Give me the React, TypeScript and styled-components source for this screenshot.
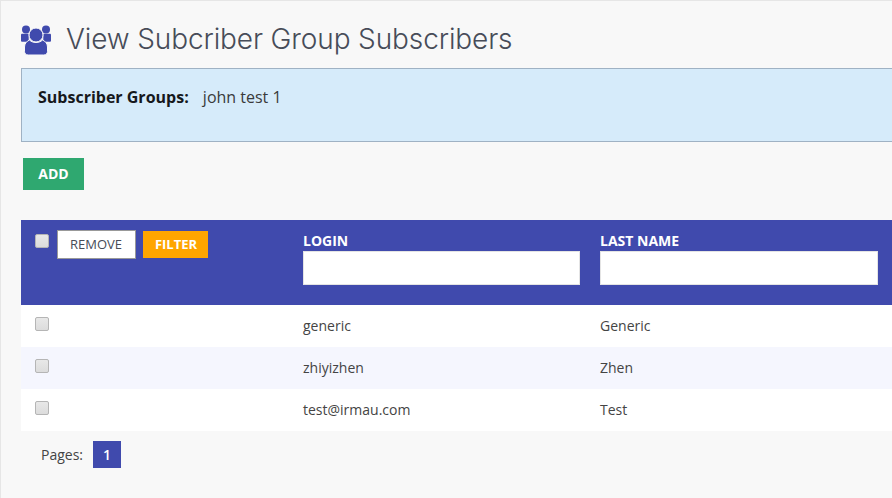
import * as React from 'react';
import styled, { createGlobalStyle } from 'styled-components';

const PRIMARY = '#404aad';
const PAGE_BG = '#f8f8f8';

const GlobalStyle = createGlobalStyle`
  html, body {
    margin: 0;
    padding: 0;
    height: 100%;
    overflow: hidden;
  }
  body {
    background: ${PAGE_BG};
    font-family: 'Open Sans', 'Liberation Sans', sans-serif;
    font-size: 14px;
    color: #444;
  }
`;

const StyledPage = styled.div`
  width: 892px;
  height: 498px;
  box-sizing: border-box;
  border-top: 1px solid #e6e6e6;
  border-left: 1px solid #e6e6e6;
  padding: 17px 0 0 20px;
  overflow: hidden;
`;

const StyledHeading = styled.div`
  display: flex;
  align-items: center;
  height: 42px;
`;

const StyledIcon = styled.svg`
  flex: none;
  margin-top: 2px;
`;

const StyledTitle = styled.h1`
  margin: 0 0 0 15px;
  font-family: Inter, 'Open Sans', sans-serif;
  font-size: 28px;
  font-weight: 300;
  letter-spacing: -0.12px;
  color: #474c58;
  white-space: nowrap;
`;

const StyledInfoBox = styled.div`
  margin-top: 8px;
  height: 74px;
  width: 900px;
  box-sizing: border-box;
  border: 1px solid #9fb2c4;
  border-right: 0;
  background: #d6ebfa;
  padding: 17px 16px;
  font-size: 16px;
  line-height: 22px;
  color: #3a3a3a;
`;

const StyledInfoLabel = styled.strong`
  font-weight: 700;
  color: #16181c;
  margin-right: 10px;
`;

const StyledAddButton = styled.button`
  display: block;
  margin: 16px 0 0 2px;
  width: 61px;
  height: 32px;
  border: 0;
  padding: 0 0 1px;
  background: #2fa870;
  color: #fff;
  font-family: inherit;
  font-size: 14px;
  font-weight: 700;
`;

const StyledTable = styled.table`
  margin-top: 30px;
  width: 900px;
  table-layout: fixed;
  border-collapse: collapse;
`;

const StyledHeaderRow = styled.tr`
  height: 85px;
  background: ${PRIMARY};
  color: #fff;
`;

const StyledHeaderCell = styled.th`
  padding: 0 0 0 20px;
  vertical-align: top;
  text-align: left;
  font-size: 14px;
  font-weight: 700;
  line-height: 19px;
  &:first-child {
    padding: 10px 0 0 14px;
  }
`;

const StyledHeaderLabel = styled.div`
  margin-top: 11px;
`;

const StyledFilterInput = styled.input<{ $width: number }>`
  display: block;
  width: ${(p) => p.$width}px;
  height: 34px;
  box-sizing: border-box;
  border: 1px solid #e4e4e4;
  background: #fff;
  margin-top: 1px;
`;

const StyledToolbar = styled.div`
  display: flex;
  align-items: center;
  gap: 7px;
`;

const StyledCheckbox = styled.span`
  display: block;
  width: 12px;
  height: 12px;
  margin-top: -3px;
  border: 1px solid #b5b5b5;
  border-radius: 2px;
  background: linear-gradient(#e8e8e8, #dcdcdc);
`;

const StyledHeaderCheckbox = styled(StyledCheckbox)`
  margin: -7px 1px 0 0;
`;

const StyledRemoveButton = styled.button`
  width: 79px;
  height: 29px;
  box-sizing: border-box;
  border: 1px solid #999;
  background: #fff;
  padding: 0 1px 1px 0;
  color: #474c58;
  font-family: inherit;
  font-size: 13px;
`;

const StyledFilterButton = styled.button`
  width: 65px;
  height: 27px;
  border: 0;
  padding: 0 0 1px 1px;
  background: #ffa500;
  color: #fff;
  font-family: inherit;
  font-size: 13px;
  font-weight: 700;
`;

const StyledRow = styled.tr<{ $alt?: boolean }>`
  height: 42px;
  background: ${(p) => (p.$alt ? '#f5f6fe' : '#fff')};
`;

const StyledCell = styled.td`
  padding: 0 0 2px 20px;
  font-size: 14px;
  color: #444;
  &:first-child {
    padding-left: 14px;
  }
`;

const StyledPager = styled.div`
  display: flex;
  align-items: center;
  gap: 10px;
  margin: 10px 0 0 20px;
  font-size: 14px;
  color: #444;
`;

const StyledPageNumber = styled.span`
  width: 28px;
  height: 27px;
  display: flex;
  align-items: center;
  justify-content: center;
  background: ${PRIMARY};
  color: #fff;
  font-weight: 600;
  font-size: 14px;
`;

const UsersIcon: React.FC = () => (
  <StyledIcon width="30" height="30" viewBox="0 0 30 30" fill={PRIMARY}>
    <circle cx="5" cy="4.500" r="4" />
    <circle cx="25" cy="4.500" r="4" />
    <path d="M0 10c0-.8.5-1.300 1.300-1.300h6.400v8H1.300C.5 16.700 0 16.200 0 15.400z" />
    <path d="M30 10c0-.8-.5-1.300-1.300-1.300h-6.400v8h6.400c.8 0 1.300-.5 1.300-1.300z" />
    <g stroke={PAGE_BG} strokeWidth="1">
      <circle cx="15" cy="10" r="7" />
      <path d="M8.500 15c1.500 1.600 3.800 2.500 6.500 2.500s5-.9 6.500-2.500c3 1.300 5 3.800 5 7v4.300c0 2.300-1.400 3.700-3.700 3.700H7.200c-2.300 0-3.700-1.400-3.700-3.700V22c0-3.200 2-5.700 5-7z" />
    </g>
  </StyledIcon>
);

const rows = [
  { login: 'generic', lastName: 'Generic' },
  { login: 'zhiyizhen', lastName: 'Zhen' },
  { login: 'test@irmau.com', lastName: 'Test' },
];

export default function App() {
  return (
    <StyledPage>
      <GlobalStyle />
      <StyledHeading>
        <UsersIcon />
        <StyledTitle>View Subcriber Group Subscribers</StyledTitle>
      </StyledHeading>
      <StyledInfoBox>
        <StyledInfoLabel>Subscriber Groups:</StyledInfoLabel> john test 1
      </StyledInfoBox>
      <StyledAddButton>ADD</StyledAddButton>
      <StyledTable>
        <colgroup>
          <col style={{ width: 262 }} />
          <col style={{ width: 297 }} />
          <col style={{ width: 341 }} />
        </colgroup>
        <thead>
          <StyledHeaderRow>
            <StyledHeaderCell>
              <StyledToolbar>
                <StyledHeaderCheckbox />
                <StyledRemoveButton>REMOVE</StyledRemoveButton>
                <StyledFilterButton>FILTER</StyledFilterButton>
              </StyledToolbar>
            </StyledHeaderCell>
            <StyledHeaderCell>
              <StyledHeaderLabel>LOGIN</StyledHeaderLabel>
              <StyledFilterInput $width={277} />
            </StyledHeaderCell>
            <StyledHeaderCell>
              <StyledHeaderLabel>LAST NAME</StyledHeaderLabel>
              <StyledFilterInput $width={278} />
            </StyledHeaderCell>
          </StyledHeaderRow>
        </thead>
        <tbody>
          {rows.map((row, i) => (
            <StyledRow key={row.login} $alt={i === 1}>
              <StyledCell>
                <StyledCheckbox />
              </StyledCell>
              <StyledCell>{row.login}</StyledCell>
              <StyledCell>{row.lastName}</StyledCell>
            </StyledRow>
          ))}
        </tbody>
      </StyledTable>
      <StyledPager>
        Pages:
        <StyledPageNumber>1</StyledPageNumber>
      </StyledPager>
    </StyledPage>
  );
}
